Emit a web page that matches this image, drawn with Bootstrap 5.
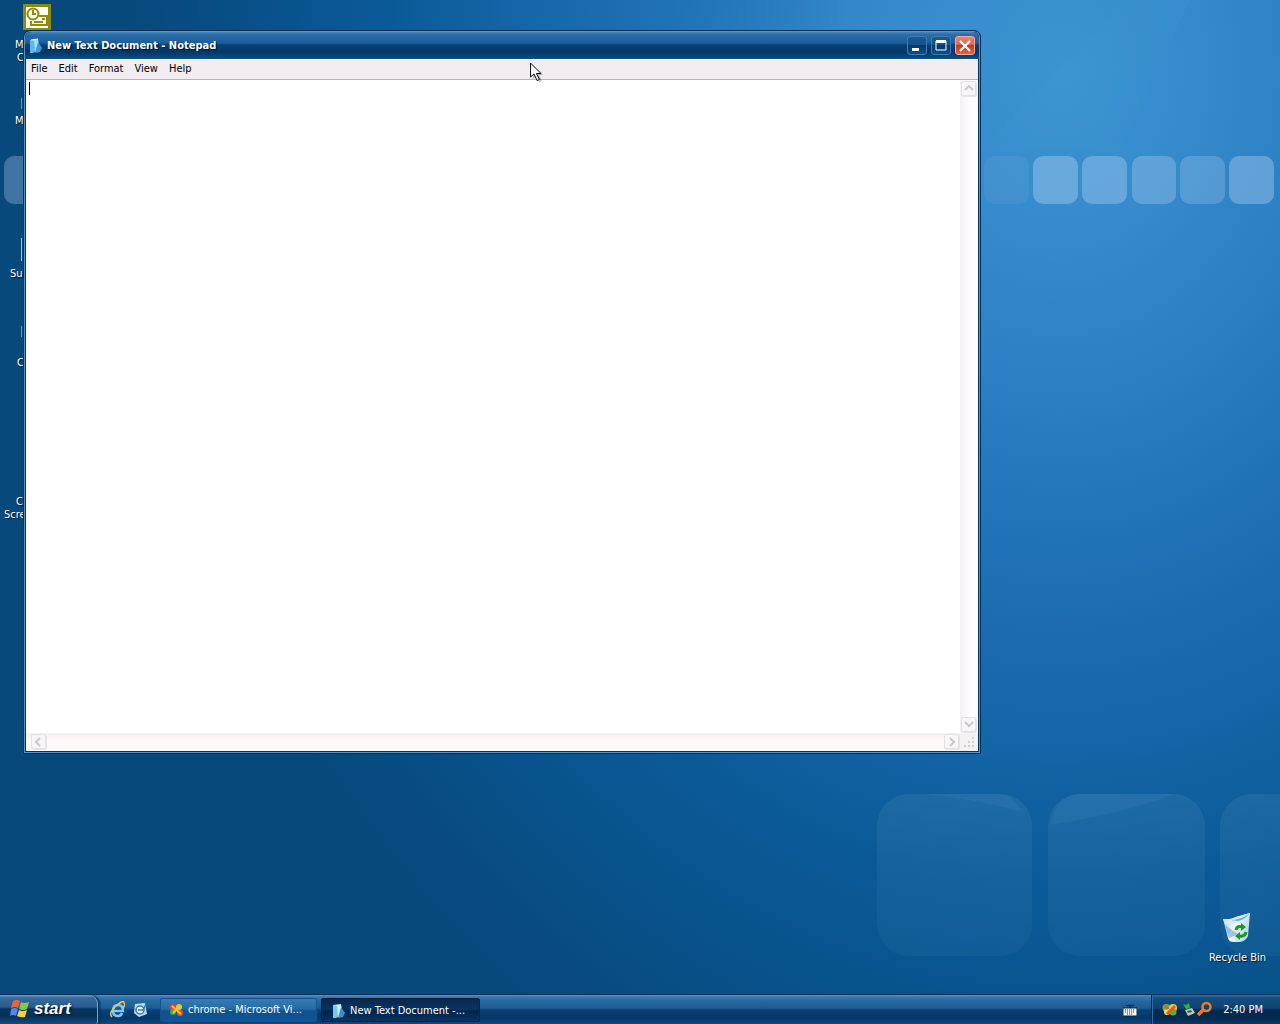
<!DOCTYPE html>
<html lang="en">
<head>
<meta charset="utf-8">
<meta name="viewport" content="width=device-width, initial-scale=1">
<title>New Text Document - Notepad</title>
<link href="https://cdn.jsdelivr.net/npm/bootstrap@5.3.0/dist/css/bootstrap.min.css" rel="stylesheet">
<style>
body{font-family:"DejaVu Sans Condensed","DejaVu Sans",sans-serif;font-size:11px;line-height:13px;color:#000;background:#07497b;cursor:default}
button,textarea{font:inherit}
svg{display:block}
.wallpaper{position:absolute;inset:0;width:100%;height:100%}
.desk-icon{position:absolute;color:#fff;text-shadow:1px 1px 1px #012}
.desk-sub{padding-left:2px}
.icon-outlook{left:4px;top:4px;width:66px}
.icon-outlook .desk-text{padding:8px 0 0 11px}
.icon-two{left:15px;top:114px}
.icon-three{left:10px;top:267px}
.icon-four{left:17px;top:356px}
.icon-five{left:4px;top:495px}
.icon-five .desk-text{padding-left:12px}
.icon-bin{right:14px;bottom:30px;text-align:center}
.sliver{position:absolute;left:21px;width:1px;background:#6f93bb}
.sliver-a{top:98px;height:11px}
.sliver-b{top:238px;height:23px;background:#a9bcdc}
.sliver-c{top:326px;height:11px}
.win{position:absolute;left:23px;top:30px;right:299px;bottom:240px;border:1px solid #022d55;border-radius:7px 7px 0 0;background:#043665;padding:0 2px 2px;box-shadow:inset 0 0 0 1px #5b95c6}
.win-title{height:27px;margin:1px -1px 0;padding:0 4px 0 3px;color:#fff;font-weight:700;border-radius:6px 6px 0 0;background:linear-gradient(#4585bb 0,#286ba5 3px,#1b5f9a 11px,#054175 13px,#023765 20px,#0b5390 28px);text-shadow:1px 1px 1px #013}
.win-title h1{font-size:11px;line-height:13px;font-weight:700}
.cap-btn{width:20px;height:19px;padding:0;border:1px solid #3f7db3;border-radius:3px;background:linear-gradient(#185a93 0,#12518a 45%,#02396b 50%,#0c528b 100%)}
.cap-close{border-color:#f3a898;background:linear-gradient(#ea8873 0,#dc6248 45%,#c5391d 50%,#df6643 100%)}
.win-menu{height:21px;background:#f1edf0;border-top:1px solid #fff;border-bottom:1px solid #b7b4b8;padding-left:4px}
.win-menu button{border:0;background:none;padding:0 6px 2px 0;margin:0 5px 0 0;color:#000}
.win-menu button:first-child{padding-left:1px}
.editor{display:grid;grid-template-columns:1fr 18px;grid-template-rows:1fr 18px;background:#fff;min-height:0}
.page-text{border:0;resize:none;outline:0;padding:2px;width:100%;height:100%;background:#fff}
.caret-bar{position:absolute;left:5px;top:51px;width:1px;height:13px;background:#000}
.track-v{background:linear-gradient(90deg,#f4f1f4,#fdfcfd 50%,#fff)}
.track-h{background:linear-gradient(#f2eff0,#fcf8f8 40%,#fdfafb)}
.sb-btn{width:15px;height:15px;padding:0;border:1px solid #e4e1e5;border-radius:2px;background:#f8f6f8;box-shadow:1px 1px 0 #e6e4e6;margin:1px}
.grip{background:#f5f2f4}
.pointer{position:absolute;left:530px;top:62px}
.taskbar{height:30px;flex:none;color:#fff;border-top:1px solid #02315d;background:linear-gradient(#5c92bf 0,#3a77ad 2px,#2768a1 6px,#1d5c95 13px,#0a4276 15px,#043766 23px,#0b4b85 29px)}
.start-btn{width:98px;border:0;border-right:1px solid #75a5cb;border-radius:0 9px 2px 0;padding:0 0 2px 10px;color:#fff;background:linear-gradient(#6b9bc5 0,#37699c 3px,#2a5c90 12px,#07345f 14px,#063157 21px,#0e4d84 29px);box-shadow:2px 0 2px #033361}
.start-word{font:italic 700 17px/20px "Liberation Sans",Arial,sans-serif;text-shadow:1px 1px 2px #012}
.quick{border:0;background:none;padding:0}
.task{height:24px;width:157px;border:1px solid #13528c;border-radius:2px;color:#fff;text-align:left;padding:0 8px;background:linear-gradient(#3a7bb2 0,#246ba7 10px,#0f518b 12px,#0e569a 24px);white-space:nowrap}
.task-on{width:159px;padding:2px 9px 0;border-color:#011e3d;background:linear-gradient(#08284c 0,#053465 10px,#01244a 12px,#063866 24px)}
.tray{width:129px;padding:0 17px 0 10px;border-left:1px solid #001f3f;box-shadow:inset 1px 0 0 #2d6da4;background:linear-gradient(#326da0 0,#154c80 3px,#0e4374 13px,#032b54 15px,#02284c 23px,#053a68 29px)}
.key-btn{margin-right:14px}
</style>
</head>
<body>
<div class="vh-100 d-flex flex-column overflow-hidden">
<main class="flex-grow-1 position-relative overflow-hidden">
<svg class="wallpaper" viewBox="0 0 1280 994" preserveAspectRatio="xMaxYMin slice" aria-hidden="true">
<defs>
<radialGradient id="glow" gradientUnits="userSpaceOnUse" cx="0" cy="0" r="1" gradientTransform="translate(1060 70) scale(930 1140)">
<stop offset="0" stop-color="#3b94d0"/><stop offset=".14" stop-color="#368bcc"/><stop offset=".28" stop-color="#2b7fc2"/><stop offset=".42" stop-color="#1f72b5"/><stop offset=".58" stop-color="#1566a8"/><stop offset=".72" stop-color="#0b5a98"/><stop offset=".87" stop-color="#085088"/><stop offset="1" stop-color="#07497b"/>
</radialGradient>
<linearGradient id="pane" x1="0" y1="0" x2="0" y2="1"><stop offset="0" stop-color="#4b8ab4" stop-opacity=".24"/><stop offset=".5" stop-color="#4685b5" stop-opacity=".17"/><stop offset="1" stop-color="#3f85b2" stop-opacity=".13"/></linearGradient>
<linearGradient id="beam" x1="0" y1="0" x2="1" y2="0"><stop offset="0" stop-color="#07508a" stop-opacity="0"/><stop offset=".6" stop-color="#45a0da" stop-opacity=".16"/><stop offset="1" stop-color="#45a0da" stop-opacity="0"/></linearGradient>
</defs>
<rect width="1280" height="994" fill="url(#glow)"/>
<path d="M760 0H1010L980 120H600Z" fill="url(#beam)"/>
<path d="M1130 0H1190L1120 150H980Z" fill="#51a5db" opacity=".08"/>
<rect x="4" y="156" width="46" height="48" rx="10" fill="#7ba3cc" opacity=".48"/>
<g fill="#a4c8ec">
<rect x="984" y="156" width="45" height="48" rx="10" opacity=".1"/>
<rect x="1033" y="156" width="45" height="48" rx="10" opacity=".46"/>
<rect x="1082" y="156" width="45" height="48" rx="10" opacity=".44"/>
<rect x="1132" y="156" width="44" height="48" rx="10" opacity=".38"/>
<rect x="1180" y="156" width="45" height="48" rx="10" opacity=".3"/>
<rect x="1229" y="156" width="45" height="48" rx="10" opacity=".44"/>
</g>
<g fill="url(#pane)">
<rect x="877" y="794" width="155" height="162" rx="32"/><rect x="1048" y="794" width="157" height="162" rx="32"/><rect x="1220" y="794" width="157" height="162" rx="32"/>
</g>
<path d="M1050 825Q1056 794 1080 794H1174Q1130 812 1050 825ZM924 794H1000Q1014 796 1022 812Q980 800 924 794Z" fill="#4c8fc8" opacity=".16"/>
</svg>

<div class="desk-icon icon-outlook">
<svg class="mx-auto" width="28" height="26" viewBox="0 0 28 26" aria-hidden="true"><rect width="28" height="26" fill="#8d8a12"/><rect x="3" y="3" width="22" height="21" fill="#fffff0"/><g fill="none" stroke="#8d8a12" stroke-width="2"><circle cx="10" cy="10" r="5.5"/><path d="M10 6v4h3M16 12h8v9H8v-4M11 18h9"/></g><path d="M19 14h3v2h-3z" fill="#8d8a12"/></svg>
<div class="desk-text"><div>M</div><div class="desk-sub">C</div></div>
</div>
<div class="desk-icon icon-two">M</div>
<div class="desk-icon icon-three">Su</div>
<div class="desk-icon icon-four">C</div>
<div class="desk-icon icon-five"><div class="desk-text">C</div><div>Scre</div></div>
<i class="sliver sliver-a"></i><i class="sliver sliver-b"></i><i class="sliver sliver-c"></i>

<div class="desk-icon icon-bin">
<svg class="mx-auto mb-2" width="30" height="31" viewBox="0 0 30 31" aria-hidden="true"><defs><linearGradient id="bin" x1="0" x2="1" y2=".4"><stop stop-color="#8ebfe9"/><stop offset=".5" stop-color="#f6fbff"/><stop offset="1" stop-color="#b8d9f2"/></linearGradient></defs><path d="M1 7Q8 8 14 5L28 1L26 24Q24 29 18 30H11Q7 30 6 26Z" fill="url(#bin)"/><path d="M1 7Q9 8 14 5L28 1Q28 6 19 9Q10 13 3 12Z" fill="#d7ecfb"/><path d="M9 8Q18 8 27 2Q24 7 16 9Z" fill="#6fa6da"/><path d="M3 13L16 22L7 26Z" fill="#79a5da" opacity=".65"/><g fill="none" stroke="#159b19" stroke-width="3"><path d="M14 18q1-5 7-3M24 20q-1 5-7 4"/></g><path d="M19 11l5 4-5 4zM18 20l-5 4 5 4z" fill="#159b19"/></svg>
<div>Recycle Bin</div>
</div>

<section class="win d-flex flex-column" aria-label="Notepad">
<header class="win-title d-flex align-items-center">
<svg class="me-1" width="15" height="16" viewBox="0 0 15 16" aria-hidden="true"><path d="M2 2l8-1 2 12-9 2Z" fill="#a5dbf5"/><path d="M2 2l4 1 1 11-5 1Z" fill="#5fb8e7"/><path d="M10 4l4 6-2 4-5 1Z" fill="#3c9bd7"/><path d="M3 2l7-1" stroke="#effbff"/></svg>
<h1 class="m-0 flex-grow-1">New Text Document - Notepad</h1>
<div class="d-flex gap-1">
<button class="cap-btn" type="button" aria-label="Minimize"><svg width="18" height="17" aria-hidden="true"><path d="M4 11h7v3H4z" fill="#fff"/></svg></button>
<button class="cap-btn" type="button" aria-label="Maximize"><svg width="18" height="17" aria-hidden="true"><path d="M4 4h10v9H4z" fill="none" stroke="#fff"/><path d="M4 3h10v3H4z" fill="#fff"/></svg></button>
<button class="cap-btn cap-close" type="button" aria-label="Close"><svg width="18" height="17" aria-hidden="true"><path d="M4 4l10 10M14 4L4 14" stroke="#fff" stroke-width="2.3"/></svg></button>
</div>
</header>
<nav class="win-menu d-flex align-items-center" aria-label="Menu bar">
<button type="button">File</button><button type="button">Edit</button><button type="button">Format</button><button type="button">View</button><button type="button">Help</button>
</nav>
<div class="editor flex-grow-1">
<textarea class="page-text" aria-label="Document text" spellcheck="false"></textarea>
<div class="track-v d-flex flex-column justify-content-between">
<button class="sb-btn" type="button" aria-label="Scroll up"><svg width="13" height="13" aria-hidden="true"><path d="M3 8l4-4 4 4" fill="none" stroke="#c9c8ce" stroke-width="2"/></svg></button>
<button class="sb-btn" type="button" aria-label="Scroll down"><svg width="13" height="13" aria-hidden="true"><path d="M3 4l4 4 4-4" fill="none" stroke="#c9c8ce" stroke-width="2"/></svg></button>
</div>
<div class="track-h d-flex justify-content-between ps-1">
<button class="sb-btn" type="button" aria-label="Scroll left"><svg width="13" height="13" aria-hidden="true"><path d="M8 3L4 7l4 4" fill="none" stroke="#c9c8ce" stroke-width="2"/></svg></button>
<button class="sb-btn" type="button" aria-label="Scroll right"><svg width="13" height="13" aria-hidden="true"><path d="M5 3l4 4-4 4" fill="none" stroke="#c9c8ce" stroke-width="2"/></svg></button>
</div>
<div class="grip"><svg width="18" height="18" aria-hidden="true"><path d="M12 4h2v2h-2zM8 8h2v2H8zM12 8h2v2h-2zM4 12h2v2H4zM8 12h2v2H8zM12 12h2v2h-2z" fill="#d2cfd4"/></svg></div>
</div>
<span class="caret-bar"></span>
</section>
<svg class="pointer" width="14" height="22" viewBox="0 0 14 22" aria-hidden="true"><path d="M3 4v13l3-3 3 6 3-1-3-6h4Z" fill="#000" opacity=".25"/><path d="M.5 1v14l3.500-3 3 6.500 2.500-1-3-6h4.500Z" fill="#f8f7fa" stroke="#111"/></svg>
</main>

<footer class="taskbar d-flex align-items-stretch">
<button class="start-btn d-flex align-items-center gap-1" type="button">
<svg width="20" height="19" viewBox="0 0 20 19" aria-hidden="true"><path d="M3 2q4-2 7 0L8 9Q5 7 1 9Z" fill="#ee6336"/><path d="M11 3q3 2 8 0l-2 7q-4 2-8 0Z" fill="#86c943"/><path d="M1 10q4-2 7 0l-2 7q-3-2-6 0Z" fill="#4c8bed"/><path d="M9 11q4 2 8 0l-2 7q-4 1-8-1Z" fill="#f6cf3c"/></svg>
<span class="start-word">start</span>
</button>
<div class="d-flex align-items-center gap-2 ps-2 ms-1">
<button class="quick" type="button" aria-label="Internet Explorer"><svg width="15" height="17" viewBox="0 0 15 17" aria-hidden="true"><path d="M4 10h9q0-6-5-6-5 0-5 6 0 5 5 5 3 0 4-3" fill="none" stroke="#78c8fb" stroke-width="2.5"/><path d="M2 16Q-2 12 6 5t8-3q2 1-1 5" fill="none" stroke="#efc64a" stroke-width="1.500"/></svg></button>
<button class="quick" type="button" aria-label="Show desktop"><svg width="15" height="17" viewBox="0 0 15 17" aria-hidden="true"><path d="M2 3l10-1 2 11-8 3-5-4Z" fill="#b9dcf5"/><circle cx="7" cy="9" r="4" fill="#e9f7ff" stroke="#3478b2" stroke-width="1.500"/><path d="M5 9h5l3-6" fill="none" stroke="#3478b2" stroke-width="1.500"/></svg></button>
</div>
<div class="d-flex align-items-center flex-grow-1 ps-1 ms-2">
<button class="task d-flex align-items-center gap-1" type="button"><svg class="flex-shrink-0" width="15" height="14" viewBox="0 0 15 14" aria-hidden="true"><circle cx="4" cy="4" r="3" fill="#e8472e"/><circle cx="10" cy="4" r="3" fill="#f0c72e"/><circle cx="4" cy="9" r="3" fill="#48aa41"/><circle cx="11" cy="10" r="3" fill="#e55626"/><path d="M3 3l9 8M11 3L4 10" stroke="#f9c336" stroke-width="2"/></svg><span>chrome - Microsoft Vi...</span></button>
<button class="task task-on d-flex align-items-center gap-1 ms-1" type="button"><svg class="flex-shrink-0" width="15" height="16" viewBox="0 0 15 16" aria-hidden="true"><path d="M2 2l8-1 2 12-9 2Z" fill="#c7ecfa"/><path d="M2 2l4 1 1 11-5 1Z" fill="#77c9ed"/><path d="M10 4l4 6-2 4-5 1Z" fill="#3c8fcd"/></svg><span>New Text Document -...</span></button>
</div>
<button class="quick key-btn" type="button" aria-label="Keyboard"><svg width="14" height="14" viewBox="0 0 14 14" aria-hidden="true"><path d="M3 2l2 1 2-1 2 1 2-1M7 3v2" fill="none" stroke="#01142a"/><rect y="5" width="14" height="8" fill="#f4f6f8" stroke="#052546"/><path d="M2 7h10M2 9h10M4 11h6" stroke="#152a40" stroke-dasharray="1 1"/></svg></button>
<div class="tray d-flex align-items-center">
<svg width="16" height="14" viewBox="0 0 16 14" aria-hidden="true"><circle cx="4.500" cy="5" r="4" fill="#58bb40"/><circle cx="11" cy="5" r="4" fill="#e5cf36"/><circle cx="5" cy="9" r="3" fill="#ecdf64"/><circle cx="11" cy="9" r="3.500" fill="#52b13c"/><path d="M3 3l3 3M5 11l8-8" stroke="#ef542c" stroke-width="3"/></svg>
<svg class="ms-1" width="14" height="16" viewBox="0 0 14 16" aria-hidden="true"><path d="M1 2l3 1 3-2 1 5-4 1Z" fill="#29b932"/><path d="M3 8l7-2 3 5-7 3Z" fill="#b9c8c4"/><path d="M5 9l4-1 1 2-4 1Z" fill="#34654c"/></svg>
<svg width="17" height="17" viewBox="0 0 17 17" aria-hidden="true"><circle cx="10.500" cy="6" r="4" fill="none" stroke="#f27a22" stroke-width="2.500"/><path d="M7 9l-5 5" stroke="#f27a22" stroke-width="3.500"/></svg>
<time class="ms-auto text-nowrap">2:40 PM</time>
</div>
</footer>
</div>
<script src="https://cdn.jsdelivr.net/npm/bootstrap@5.3.0/dist/js/bootstrap.bundle.min.js"></script>
</body>
</html>
